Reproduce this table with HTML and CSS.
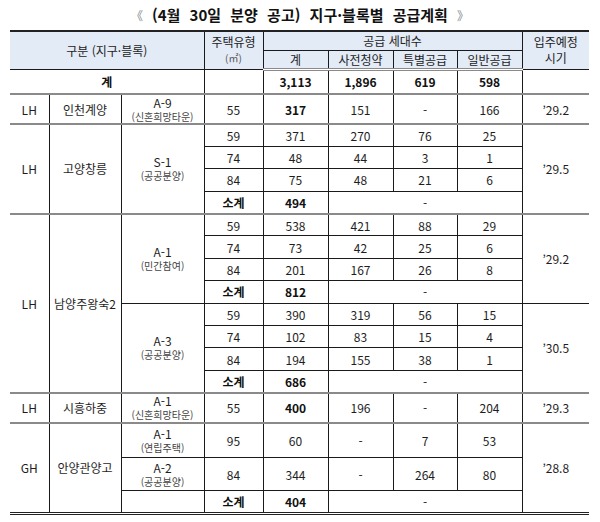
FILE: index.html
```html
<!DOCTYPE html>
<html lang="ko">
<head>
<meta charset="utf-8">
<title>공급계획</title>
<link rel="stylesheet" href="styles.css">
</head>
<body>
<div class="title"><span class="br">《</span><span class="tt">(4월 30일 분양 공고) 지구·블록별 공급계획</span><span class="br">》</span></div>
<table class="plan">
  <colgroup>
    <col class="c1"><col class="c2"><col class="c3"><col class="c4"><col class="c5"><col class="c6"><col class="c7"><col class="c8"><col class="c9">
  </colgroup>
  <thead>
    <tr class="h1">
      <th colspan="3" rowspan="2">구분 (지구·블록)</th>
      <th rowspan="2" class="top"><div class="two">주택유형</div><div class="unit">(㎡)</div></th>
      <th colspan="4">공급 세대수</th>
      <th rowspan="2" class="top"><div class="two">입주예정</div><div class="two">시기</div></th>
    </tr>
    <tr class="h2">
      <th>계</th><th>사전청약</th><th>특별공급</th><th>일반공급</th>
    </tr>
  </thead>
  <tbody>
    <tr class="total">
      <td colspan="3" class="b">계</td><td></td><td class="b">3,113</td><td class="b">1,896</td><td class="b">619</td><td class="b">598</td><td></td>
    </tr>
    <tr class="grp single">
      <td>LH</td><td>인천계양</td><td><div class="blk">A-9</div><div class="sub">(신혼희망타운)</div></td><td>55</td><td class="b">317</td><td>151</td><td>-</td><td>166</td><td>’29.2</td>
    </tr>
    <tr class="grp r">
      <td rowspan="4">LH</td><td rowspan="4">고양창릉</td><td rowspan="4"><div class="blk">S-1</div><div class="sub">(공공분양)</div></td><td>59</td><td>371</td><td>270</td><td>76</td><td>25</td><td rowspan="4">’29.5</td>
    </tr>
    <tr class="r"><td>74</td><td>48</td><td>44</td><td>3</td><td>1</td></tr>
    <tr class="r"><td>84</td><td>75</td><td>48</td><td>21</td><td>6</td></tr>
    <tr class="r"><td class="b">소계</td><td class="b">494</td><td colspan="3">-</td></tr>
    <tr class="grp r">
      <td rowspan="8">LH</td><td rowspan="8">남양주왕숙2</td><td rowspan="4"><div class="blk">A-1</div><div class="sub">(민간참여)</div></td><td>59</td><td>538</td><td>421</td><td>88</td><td>29</td><td rowspan="4">’29.2</td>
    </tr>
    <tr class="r"><td>74</td><td>73</td><td>42</td><td>25</td><td>6</td></tr>
    <tr class="r"><td>84</td><td>201</td><td>167</td><td>26</td><td>8</td></tr>
    <tr class="r"><td class="b">소계</td><td class="b">812</td><td colspan="3">-</td></tr>
    <tr class="r">
      <td rowspan="4"><div class="blk">A-3</div><div class="sub">(공공분양)</div></td><td>59</td><td>390</td><td>319</td><td>56</td><td>15</td><td rowspan="4">’30.5</td>
    </tr>
    <tr class="r"><td>74</td><td>102</td><td>83</td><td>15</td><td>4</td></tr>
    <tr class="r"><td>84</td><td>194</td><td>155</td><td>38</td><td>1</td></tr>
    <tr class="r"><td class="b">소계</td><td class="b">686</td><td colspan="3">-</td></tr>
    <tr class="grp single2">
      <td>LH</td><td>시흥하중</td><td><div class="blk">A-1</div><div class="sub">(신혼희망타운)</div></td><td>55</td><td class="b">400</td><td>196</td><td>-</td><td>204</td><td>’29.3</td>
    </tr>
    <tr class="grp tall1">
      <td rowspan="3">GH</td><td rowspan="3">안양관양고</td><td><div class="blk">A-1</div><div class="sub">(연립주택)</div></td><td>95</td><td>60</td><td>-</td><td>7</td><td>53</td><td rowspan="3">’28.8</td>
    </tr>
    <tr class="tall2">
      <td><div class="blk">A-2</div><div class="sub">(공공분양)</div></td><td>84</td><td>344</td><td>-</td><td>264</td><td>80</td>
    </tr>
    <tr class="r last"><td></td><td class="b">소계</td><td class="b">404</td><td colspan="3">-</td></tr>
  </tbody>
</table>
</body>
</html>
```
FILE: styles.css
```css
html, body {
  margin: 0;
  padding: 0;
  background: #ffffff;
}
body {
  width: 600px;
  font-family: "Noto Sans CJK KR", "Noto Sans", sans-serif;
  color: #1e1e1e;
}
.title {
  height: 30px;
  line-height: 30px;
  text-align: center;
  font-size: 15px;
  font-weight: bold;
  color: #111;
}
.title .tt {
  word-spacing: 5px;
  margin: 0 9px;
}
.title .br {
  font-weight: normal;
  color: #888;
  font-size: 12px;
}
.plan {
  margin-left: 10px;
  width: 579px;
  table-layout: fixed;
  border-collapse: collapse;
  border-top: 2px solid #222;
  border-bottom: 3px double #222;
  border-left: hidden;
  border-right: hidden;
  font-size: 12px;
}
.c1 { width: 39px; }
.c2 { width: 72px; }
.c3 { width: 83px; }
.c4 { width: 59px; }
.c5 { width: 65px; }
.c6 { width: 65px; }
.c7 { width: 64px; }
.c8 { width: 65px; }
.c9 { width: 67px; }
.plan th, .plan td {
  border: 1px solid #1a1a1a;
  padding: 0;
  text-align: center;
  vertical-align: middle;
  line-height: 15px;
  font-weight: normal;
}
.plan th {
  background: #e3ebf6;
  color: #222;
}
.plan th.top {
  vertical-align: top;
  padding-top: 2px;
}
.plan .h1 { height: 19px; }
.plan .h2 { height: 19px; }
.plan .h2 th { border-bottom: 3px double #8a8a8a; }
.plan .two { line-height: 16px; }
.plan .unit {
  font-size: 10px;
  color: #555;
  line-height: 16px;
}
.plan .total { height: 25px; }
.plan .single { height: 30px; }
.plan .r { height: 22.4px; }
.plan .single2 { height: 30px; }
.plan .tall1 { height: 35px; }
.plan .tall2 { height: 33px; }
.plan .grp td { border-top: 2px solid #8a8a8a; }
.plan .b { font-weight: bold; color: #111; }
.plan .blk { line-height: 14px; }
.plan .sub {
  font-size: 10px;
  line-height: 12px;
  margin-top: 1px;
  color: #444;
}
```
